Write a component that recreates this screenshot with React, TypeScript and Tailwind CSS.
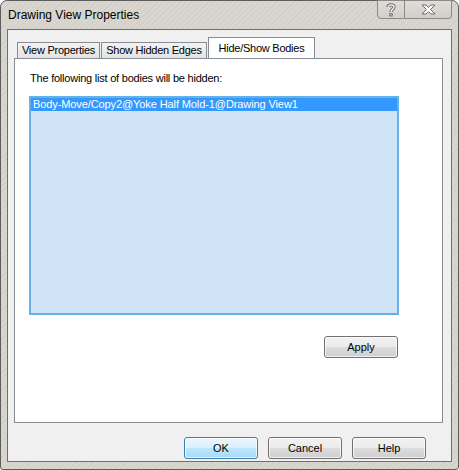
import React from 'react';

const font = "font-['Liberation_Sans',Arial,sans-serif]";

function DlgButton({ label, primary = false }: { label: string; primary?: boolean }) {
  return (
    <button
      className={`relative w-[74px] h-[22px] rounded-[3px] border text-[11px] text-black overflow-hidden ${
        primary
          ? 'border-[#3c7fb1] bg-[linear-gradient(#eaf6fd_0%,#d9f0fc_50%,#bee6fd_50%,#a7d9f5_100%)]'
          : 'border-[#707070] bg-[linear-gradient(#f2f2f2_0%,#ebebeb_50%,#dddddd_50%,#cfcfcf_100%)]'
      }`}
    >
      <span className="absolute inset-0 rounded-[2px] border border-white/70" />
      <span className="relative">{label}</span>
    </button>
  );
}

function Tab({ label, width, active = false }: { label: string; width: string; active?: boolean }) {
  if (active) {
    return (
      <div
        className={`${width} h-[21px] -mb-px relative z-10 bg-white border border-b-0 border-[#898c95] flex items-center justify-center text-[11px] tracking-[-0.25px] pt-[1px]`}
      >
        {label}
      </div>
    );
  }
  return (
    <div
      className={`${width} h-[16px] mt-[5px] bg-[linear-gradient(#f3f3f3,#e3e3e3)] border border-b-0 border-[#898c95] flex items-center justify-center text-[11px] tracking-[-0.25px]`}
    >
      {label}
    </div>
  );
}

export default function App() {
  return (
    <div className={`${font} w-[459px] h-[470px] bg-white`}>
      <div className="relative w-[459px] h-[470px] flex flex-col rounded-t-[7px] rounded-b-[3px] border border-[#5d5d5d] bg-[repeating-linear-gradient(135deg,#d9d6d0_0px,#d9d6d0_3px,#d1cec8_3px,#d1cec8_4px)]">
        {/* Title bar */}
        <div className="h-[28px] flex items-center pl-[7px] text-[12px] text-black">Drawing View Properties</div>

        {/* Caption buttons */}
        <div className="absolute top-[-1px] left-[376px] flex">
          <div className="w-[28px] h-[19px] border border-[#8a8a8a] rounded-bl-[4px] bg-[linear-gradient(#e0ddd8,#d2cfc9)] flex items-center justify-center">
            <svg width="10" height="14" viewBox="0 0 10 14">
              <path d="M2 4 C2 1.2 8 1.2 8 4 C8 6.2 5 6.2 5 9" fill="none" stroke="#6b6b6b" strokeWidth="3.2" />
              <rect x="3.3" y="10.2" width="3.4" height="3.2" fill="#6b6b6b" />
              <path d="M2 4 C2 1.2 8 1.2 8 4 C8 6.2 5 6.2 5 9" fill="none" stroke="#fff" strokeWidth="1.2" />
              <rect x="4.4" y="11.2" width="1.2" height="1.2" fill="#fff" />
            </svg>
          </div>
          <div className="w-[47px] h-[19px] border border-l-0 border-[#8a8a8a] rounded-br-[4px] bg-[linear-gradient(#e0ddd8,#d2cfc9)] flex items-center justify-center">
            <svg width="15" height="11" viewBox="0 0 15 11">
              <path
                d="M1 1 H5 L7.5 3.5 L10 1 H14 L9.5 5.5 L14 10 H10 L7.5 7.5 L5 10 H1 L5.5 5.5 Z"
                fill="#fff"
                stroke="#6b6b6b"
                strokeWidth="1"
                strokeLinejoin="round"
              />
            </svg>
          </div>
        </div>

        {/* Client area */}
        <div className="flex-1 mx-[6px] mb-[7px] border border-[#6e6e6e] bg-[#f0f0f0] flex flex-col px-[6px] pt-[7px]">
          {/* Tab control */}
          <div className="flex flex-col w-[429px]">
            <div className="flex gap-[1px] pl-[3px] h-[21px] items-start">
              <Tab label="View Properties" width="w-[83px]" />
              <Tab label="Show Hidden Edges" width="w-[106px]" />
              <Tab label="Hide/Show Bodies" width="w-[107px]" active />
            </div>
            <div className="h-[365px] border border-[#898c95] bg-white flex flex-col pl-[14px] pt-[12px]">
              <div className="h-[14px] leading-[14px] text-[11px] tracking-[-0.22px] text-black pl-[1px]">
                The following list of bodies will be hidden:
              </div>
              <div className="mt-[11px] w-[370px] h-[219px] border-2 border-[#64b2e6] bg-[#cfe4f7]">
                <div className="h-[13px] bg-[#3399ff] text-white text-[11px] tracking-[-0.1px] leading-[13px] pl-[2px]">
                  Body-Move/Copy2@Yoke Half Mold-1@Drawing View1
                </div>
              </div>
              <div className="w-[370px] flex justify-end mt-[21px] pr-[1px]">
                <DlgButton label="Apply" />
              </div>
            </div>
          </div>

          {/* Bottom buttons */}
          <div className="flex justify-end gap-[10px] mt-[14px] pr-[19px]">
            <DlgButton label="OK" primary />
            <DlgButton label="Cancel" />
            <DlgButton label="Help" />
          </div>
        </div>
      </div>
    </div>
  );
}
